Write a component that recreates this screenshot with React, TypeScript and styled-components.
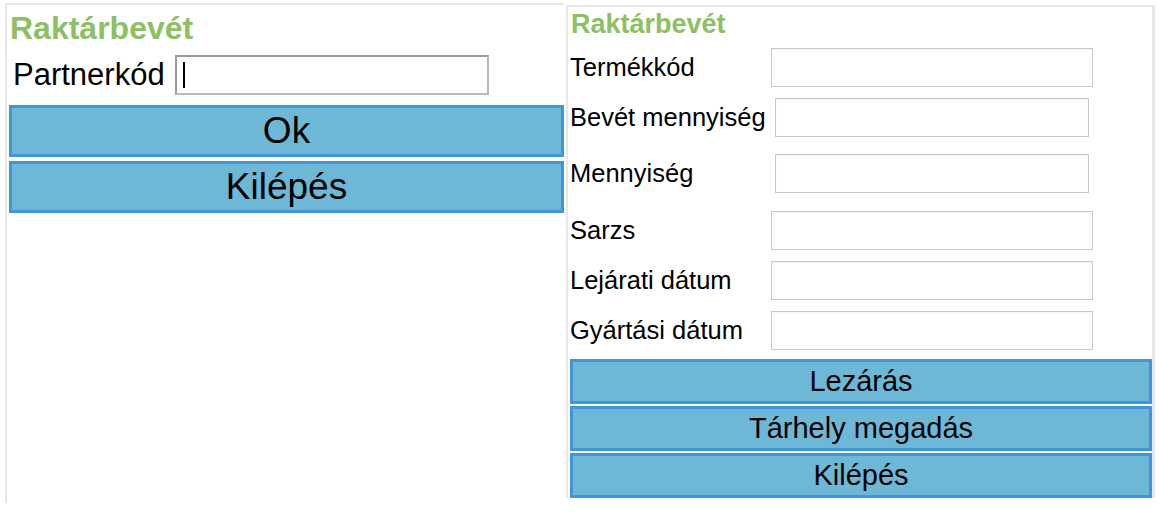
import * as React from "react";
import styled, { createGlobalStyle } from "styled-components";

const GlobalStyle = createGlobalStyle`
    html, body {
        margin: 0;
        padding: 0;
        background: #ffffff;
    }
    body {
        font-family: "Liberation Sans", Arial, sans-serif;
        color: #000;
    }
`;

const Page = styled.div`
    display: flex;
    align-items: flex-start;
    width: 1160px;
    height: 513px;
    overflow: hidden;
`;

const Panel = styled.div<{ $width: number; $height: number; $top: number; $left: number; $rightBorder?: boolean }>`
    box-sizing: border-box;
    width: ${p => p.$width}px;
    height: ${p => p.$height}px;
    margin-top: ${p => p.$top}px;
    margin-left: ${p => p.$left}px;
    border-left: 2px solid #e7e7e7;
    border-top: 2px solid #e7e7e7;
    border-right: ${p => (p.$rightBorder ? "3px solid #e7e7e7" : "none")};
    padding: 0 0 0 2px;
    display: flex;
    flex-direction: column;
`;

const Title = styled.h1<{ $size: number; $top: number }>`
    margin: ${p => p.$top}px 0 0 1px;
    font-size: ${p => p.$size}px;
    line-height: ${p => p.$size + 4}px;
    font-weight: bold;
    color: #8cc063;
`;

const PartnerRow = styled.div`
    display: flex;
    align-items: center;
    gap: 10px;
    margin: 9px 0 0 4px;
    height: 40px;
`;

const BigLabel = styled.label`
    font-size: 31px;
`;

const PartnerInput = styled.input`
    box-sizing: border-box;
    width: 314px;
    height: 40px;
    border: 2px solid #9a9a9a;
    border-right-color: #b8b8b8;
    border-bottom-color: #b8b8b8;
    padding: 0 6px;
    font-size: 24px;
    outline: none;
`;

const Caret = styled.span`
    display: inline-block;
    width: 2px;
    height: 26px;
    background: #000;
`;

const ButtonStack = styled.div<{ $gap: number; $top: number }>`
    display: flex;
    flex-direction: column;
    gap: ${p => p.$gap}px;
    margin-top: ${p => p.$top}px;
`;

const BlueButton = styled.button<{ $height: number; $size: number }>`
    box-sizing: border-box;
    height: ${p => p.$height}px;
    width: 100%;
    background: #6eb8d7;
    border: 3px solid #4196d9;
    font-family: "Liberation Sans", Arial, sans-serif;
    font-size: ${p => p.$size}px;
    color: #000;
    padding: 0;
    cursor: pointer;
`;

const FieldRow = styled.div<{ $gap: number }>`
    display: flex;
    align-items: center;
    height: 40px;
    margin-top: ${p => p.$gap}px;
`;

const FieldLabel = styled.label`
    width: 201px;
    font-size: 25.5px;
    flex-shrink: 0;
`;

const FieldInput = styled.input<{ $inset: boolean }>`
    box-sizing: border-box;
    width: ${p => (p.$inset ? 314 : 322)}px;
    height: 39px;
    margin-left: ${p => (p.$inset ? 4 : 0)}px;
    border: 1px solid #c8c8c8;
    box-shadow: inset 0 1px 1px rgba(0, 0, 0, 0.04);
    font-size: 20px;
    outline: none;
`;

const InputWrap = styled.div`
    position: relative;
    display: flex;
    align-items: center;
`;

const CaretSlot = styled.div`
    position: absolute;
    left: 8px;
    top: 7px;
`;

const fields: Array<[label: string, gap: number, inset: boolean]> = [
    ["Termékkód", 7, false],
    ["Bevét mennyiség", 10, true],
    ["Mennyiség", 16, true],
    ["Sarzs", 17, false],
    ["Lejárati dátum", 10, false],
    ["Gyártási dátum", 10, false],
];

export default function App(): React.JSX.Element {
    return (
        <Page>
            <GlobalStyle />
            <Panel $width={559} $height={500} $top={3} $left={5}>
                <Title $size={32} $top={5}>Raktárbevét</Title>
                <PartnerRow>
                    <BigLabel>Partnerkód</BigLabel>
                    <InputWrap>
                        <PartnerInput />
                        <CaretSlot>
                            <Caret />
                        </CaretSlot>
                    </InputWrap>
                </PartnerRow>
                <ButtonStack $gap={4} $top={10}>
                    <BlueButton $height={52} $size={37}>Ok</BlueButton>
                    <BlueButton $height={52} $size={37}>Kilépés</BlueButton>
                </ButtonStack>
            </Panel>
            <Panel $width={589} $height={493} $top={5} $left={2} $rightBorder>
                <Title $size={27} $top={2}>Raktárbevét</Title>
                {fields.map(([label, gap, inset]) => (
                    <FieldRow key={label} $gap={gap}>
                        <FieldLabel>{label}</FieldLabel>
                        <FieldInput $inset={inset} />
                    </FieldRow>
                ))}
                <ButtonStack $gap={2} $top={9}>
                    <BlueButton $height={45} $size={29}>Lezárás</BlueButton>
                    <BlueButton $height={45} $size={29}>Tárhely megadás</BlueButton>
                    <BlueButton $height={45} $size={29}>Kilépés</BlueButton>
                </ButtonStack>
            </Panel>
        </Page>
    );
}
